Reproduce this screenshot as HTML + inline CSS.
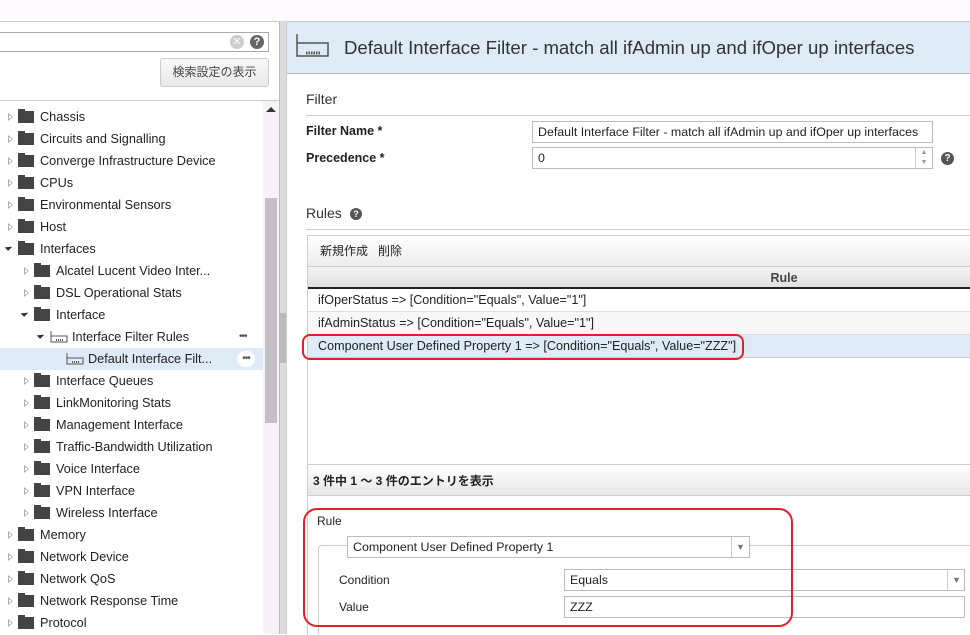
<!DOCTYPE html><html><head><meta charset="utf-8"><style>
*{box-sizing:border-box;margin:0;padding:0}
body{width:970px;height:634px;overflow:hidden;background:#fff;font-family:"Liberation Sans","Noto Sans CJK JP",sans-serif;font-size:12px;color:#222;position:relative}
.a{position:absolute}
.row{position:absolute;left:0;width:263px;height:22px;line-height:22px;font-size:12.7px;white-space:nowrap}
.tri{position:absolute;top:7px;width:0;height:0;border-left:5px solid #aaa;border-top:4px solid transparent;border-bottom:4px solid transparent}
.tri:after{content:"";position:absolute;left:-4px;top:-2px;border-left:3px solid #fff;border-top:2px solid transparent;border-bottom:2px solid transparent}
.tri.o{border-left:5px solid transparent;border-top:0;border-bottom:6px solid #333;border-right:0;transform:rotate(45deg);top:6px}
.tri.o:after{display:none}
.fold{position:absolute;top:5px;width:16px;height:12px;background:#444;border-top:2px solid #444}
.fold:before{content:"";position:absolute;left:0;top:-4px;width:7px;height:3px;background:#444}
.lbl{position:absolute}
.dots{position:absolute;left:239px;top:0;font-size:10px;color:#555;letter-spacing:-1px}
.inp{position:absolute;border:1px solid #bbb;background:#fff;height:22px;line-height:20px;padding-left:5px;font-size:12.4px}
.rr{position:absolute;left:308px;width:662px;height:23px;line-height:22px;padding-left:10px;border-bottom:1px solid #ddd;font-size:12.6px}
</style></head><body>
<div class="a" style="left:0;top:0;width:970px;height:21px;background:#fdf9fc"></div>
<div class="a" style="left:0;top:21px;width:280px;height:613px;border-top:1px solid #ccc;border-right:1px solid #bbb"></div>
<div class="a" style="left:0;top:32px;width:269px;height:20px;border:1px solid #aaa;border-left:0;background:#fff"></div>
<div class="a" style="left:230px;top:35px;width:14px;height:14px;border-radius:7px;background:#ccc;color:#fff;font-size:11px;line-height:14px;text-align:center">✕</div>
<div class="a" style="left:250px;top:35px;width:14px;height:14px;border-radius:7px;background:#666;color:#fff;font-size:11px;font-weight:bold;line-height:14px;text-align:center">?</div>
<div class="a" style="left:160px;top:58px;width:109px;height:29px;border:1px solid #ccc;border-radius:3px;background:linear-gradient(#f8f8f8,#e8e8e8);text-align:center;line-height:27px;font-size:12px;color:#444">検索設定の表示</div>
<div class="a" style="left:0;top:100px;width:279px;height:1px;background:#ccc"></div>
<div class="a" style="left:263px;top:101px;width:16px;height:533px;background:#f6f2f5"></div>
<div class="a" style="left:266px;top:107px;width:0;height:0;border-left:5px solid transparent;border-right:5px solid transparent;border-bottom:5px solid #333"></div>
<div class="a" style="left:265px;top:198px;width:12px;height:225px;background:#c3c0c3"></div>
<div class="a" style="left:280px;top:21px;width:7px;height:613px;background:#dcdcdc;border-right:1px solid #ccc"></div>
<div class="a" style="left:280px;top:313px;width:6px;height:50px;background:#bbb"></div>
<div id="tree"></div>
<div class="a" style="left:287px;top:21px;width:683px;height:53px;background:#deeaf5;border-top:1px solid #ccc;border-bottom:1px solid #bbb"></div>
<svg class="a" style="left:296px;top:33px" width="34" height="26"><path d="M1 1V23H32V10H1" fill="none" stroke="#555" stroke-width="1.5"/><path d="M10 20h14" stroke="#555" stroke-width="3" stroke-dasharray="1.5 1"/></svg>
<div class="a" style="left:344px;top:37px;font-size:18.6px;color:#333;white-space:nowrap">Default Interface Filter - match all ifAdmin up and ifOper up interfaces</div>
<div class="a" style="left:306px;top:91px;font-size:14px;color:#333">Filter</div>
<div class="a" style="left:306px;top:115px;width:664px;height:1px;background:#ccc"></div>
<div class="a" style="left:306px;top:124px;font-weight:bold;font-size:12.5px">Filter Name *</div>
<div class="a" style="left:306px;top:151px;font-weight:bold;font-size:12.5px">Precedence *</div>
<div class="inp" style="left:532px;top:121px;width:401px;white-space:nowrap;overflow:hidden">Default Interface Filter - match all ifAdmin up and ifOper up interfaces</div>
<div class="inp" style="left:532px;top:147px;width:401px">0</div>
<div class="a" style="left:915px;top:148px;width:17px;height:20px;border-left:1px solid #ccc;font-size:7px;color:#999;text-align:center;line-height:10px">▲<br>▼</div>
<div class="a" style="left:941px;top:152px;width:13px;height:13px;border-radius:7px;background:#555;color:#fff;font-size:10px;font-weight:bold;line-height:13px;text-align:center">?</div>
<div class="a" style="left:306px;top:205px;font-size:14px;color:#333">Rules</div>
<div class="a" style="left:350px;top:208px;width:12px;height:12px;border-radius:6px;background:#555;color:#fff;font-size:9px;font-weight:bold;line-height:12px;text-align:center">?</div>
<div class="a" style="left:306px;top:229px;width:664px;height:1px;background:#ccc"></div>
<div class="a" style="left:307px;top:235px;width:663px;height:400px;border-left:1px solid #ccc;border-top:1px solid #ccc"></div>
<div class="a" style="left:308px;top:236px;width:662px;height:30px;background:linear-gradient(#fff,#ececec);line-height:30px;padding-left:12px;font-size:12px">新規作成&nbsp;&nbsp; 削除</div>
<div class="a" style="left:308px;top:266px;width:662px;height:23px;background:linear-gradient(#f4f4f4,#e0e0e0);border-top:1px solid #ccc;border-bottom:2px solid #222;text-align:center;line-height:22px;font-weight:bold;color:#444;padding-left:290px;font-size:12.5px">Rule</div>
<div class="rr" style="top:289px">ifOperStatus =&gt; [Condition="Equals", Value="1"]</div>
<div class="rr" style="top:312px;background:#f7f7f7">ifAdminStatus =&gt; [Condition="Equals", Value="1"]</div>
<div class="rr" style="top:335px;background:#deeaf5;border-bottom-color:#ccc">Component User Defined Property 1 =&gt; [Condition="Equals", Value="ZZZ"]</div>
<div class="a" style="left:302px;top:334px;width:442px;height:26px;border:2px solid #e3202a;border-radius:8px"></div>
<div class="a" style="left:308px;top:464px;width:662px;height:32px;background:linear-gradient(#fff,#e6e6e6);border-top:1px solid #ccc;border-bottom:1px solid #ccc;line-height:32px;padding-left:5px;font-weight:bold;font-size:12px">3 件中 1 ～ 3 件のエントリを表示</div>
<div class="a" style="left:317px;top:514px">Rule</div>
<div class="a" style="left:318px;top:545px;width:652px;height:89px;border-left:1px solid #ccc;border-top:1px solid #ccc;border-top-left-radius:4px"></div>
<div class="inp" style="left:347px;top:536px;width:403px;height:22px">Component User Defined Property 1</div>
<div class="a" style="left:731px;top:537px;width:18px;height:20px;border-left:1px solid #ccc;color:#777;font-size:9px;text-align:center;line-height:20px">▼</div>
<div class="a" style="left:339px;top:573px">Condition</div>
<div class="a" style="left:339px;top:600px">Value</div>
<div class="inp" style="left:564px;top:569px;width:401px">Equals</div>
<div class="a" style="left:947px;top:570px;width:18px;height:20px;border-left:1px solid #ccc;color:#777;font-size:9px;text-align:center;line-height:20px">▼</div>
<div class="inp" style="left:564px;top:596px;width:401px">ZZZ</div>
<div class="a" style="left:303px;top:508px;width:490px;height:119px;border:2px solid #e3202a;border-radius:14px"></div>
<script>
var rows=[[0,"Chassis"],[0,"Circuits and Signalling"],[0,"Converge Infrastructure Device"],[0,"CPUs"],[0,"Environmental Sensors"],[0,"Host"],[0,"Interfaces","o"],[1,"Alcatel Lucent Video Inter..."],[1,"DSL Operational Stats"],[1,"Interface","o"],[2,"Interface Filter Rules","oi"],[3,"Default Interface Filt...","i"],[1,"Interface Queues"],[1,"LinkMonitoring Stats"],[1,"Management Interface"],[1,"Traffic-Bandwidth Utilization"],[1,"Voice Interface"],[1,"VPN Interface"],[1,"Wireless Interface"],[0,"Memory"],[0,"Network Device"],[0,"Network QoS"],[0,"Network Response Time"],[0,"Protocol"]];
var h="";rows.forEach(function(r,i){var y=106+i*22,x=r[0]*16,f=r[2]||"";
var bg=i==11?"background:#deeaf5;":"";
h+='<div class="row" style="top:'+y+'px;'+bg+'">';
if(f.indexOf("i")<0||f.indexOf("o")>=0){h+=f.indexOf("o")>=0?'<div class="tri o" style="left:'+(x+6)+'px"></div>':'<div class="tri" style="left:'+(x+8)+'px"></div>';}
if(f.indexOf("i")>=0){h+='<svg style="position:absolute;left:'+(x+18)+'px;top:4px" width="18" height="14"><path d="M1 1V12H17V6H1" fill="none" stroke="#555"/><path d="M6 10h7" stroke="#555" stroke-width="2" stroke-dasharray="1 1"/></svg>';}
else h+='<div class="fold" style="left:'+(x+18)+'px"></div>';
h+='<span class="lbl" style="left:'+(x+40)+'px">'+r[1]+'</span>';
if(i==10)h+='<span class="dots">•••</span>';
if(i==11)h+='<span class="dots" style="background:#fff;border-radius:9px;width:18px;height:16px;top:3px;line-height:16px;left:237px;text-align:center">•••</span>';
h+='</div>';});
document.getElementById("tree").innerHTML=h;
</script>
</body></html>
